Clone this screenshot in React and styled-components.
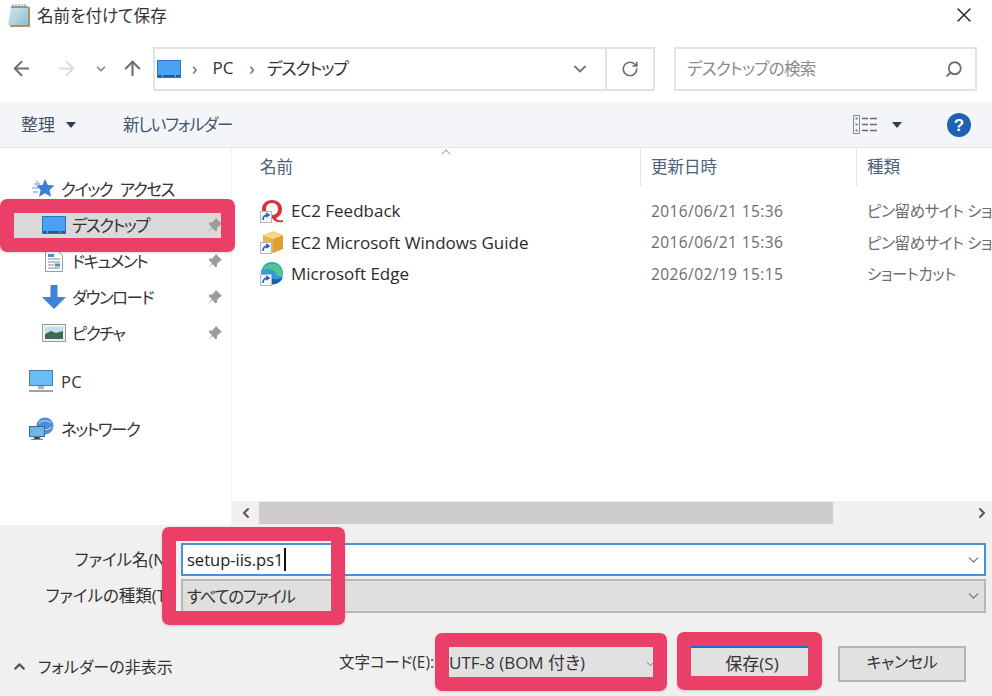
import React from 'react';
import styled, {createGlobalStyle} from 'styled-components';
import {ArrowLeft, ArrowRight, ArrowUp, ChevronDown, ChevronLeft, ChevronRight, ChevronUp, RotateCw, Search, X} from 'lucide-react';

const GlobalStyle = createGlobalStyle`
  html, body { margin: 0; padding: 0; background: #fff; }
  * { box-sizing: border-box; }
`;

const FONT = `"Open Sans", "Noto Sans CJK JP", sans-serif`;

// --- icons ---
const NotepadIcon = () => (
  <svg width="24" height="24" viewBox="0 0 24 24">
    <defs>
      <linearGradient id="pad" x1="0" y1="0" x2="1" y2="1">
        <stop offset="0" stopColor="#d5e9ef" />
        <stop offset="1" stopColor="#8fc0d2" />
      </linearGradient>
    </defs>
    <path d="M6 4h17v20H3z" fill="#a8946c" />
    <path d="M4 3h17v19H1z" fill="url(#pad)" />
    <path d="M4 3h17v2H4z" fill="#8ea2aa" />
    <path d="M6 1v4M9 1v4M12 1v4M15 1v4M18 1v4" stroke="#7f8c90" strokeWidth="1" />
  </svg>
);

const DesktopIcon = ({size = 24}) => (
  <svg width={size} height={size * 0.75} viewBox="0 0 24 18">
    <rect x="0.500" y="0.500" width="23" height="17" fill="#4aa0f2" stroke="#2f77b8" />
    <rect x="1" y="15" width="22" height="2" fill="#1c5f9e" />
    <rect x="5" y="15.500" width="1" height="1" fill="#fff" />
    <rect x="18" y="15.500" width="1" height="1" fill="#fff" />
  </svg>
);

const StarIcon = () => (
  <svg width="24" height="22" viewBox="0 0 24 22">
    <path d="M14 1l2.800 6 6.700.6-5 4.400 1.600 6.800-6.100-3.600L8 18.800l1.600-6.800-4.400-4.400 6.300-.6z" fill="#3d7fd1" />
    <path d="M3 6h6M1 10h6M2 14h5M5 3l3 2" stroke="#8fb8e6" strokeWidth="1.400" />
  </svg>
);

const DocIcon = () => (
  <svg width="18" height="22" viewBox="0 0 18 22">
    <path d="M.5.500h12l5 5v16H.5z" fill="#fff" stroke="#9a9a9a" />
    <path d="M3 4h6v3H3z" fill="#4a8ad4" />
    <path d="M3 9h12M3 12h12M3 15h6M3 18h12" stroke="#7d8a96" strokeWidth="1" />
    <rect x="10" y="13.500" width="5" height="3" fill="#4a8ad4" />
  </svg>
);

const DownloadIcon = () => (
  <svg width="24" height="24" viewBox="0 0 24 24">
    <path d="M8.500 0h7v12H24L12 24 0 12h8.500z" fill="#3f82d6" />
  </svg>
);

const PictureIcon = () => (
  <svg width="24" height="18" viewBox="0 0 24 18">
    <rect x="0.500" y="0.500" width="23" height="17" fill="#eef1f2" stroke="#9a9a9a" />
    <rect x="3" y="3" width="18" height="12" fill="#bfe0ee" />
    <path d="M3 10l6-3 5 2 7-2v8H3z" fill="#3f6a52" />
  </svg>
);

const PcIcon = () => (
  <svg width="24" height="22" viewBox="0 0 24 22">
    <rect x="0.500" y="0.500" width="23" height="15" fill="#69bdf7" stroke="#4c7ea6" />
    <path d="M9 16h6v3H9z" fill="#a8b2bb" />
    <path d="M0 21h24" stroke="#9aa3ab" strokeWidth="2" />
  </svg>
);

const NetworkIcon = () => (
  <svg width="26" height="24" viewBox="0 0 26 24">
    <circle cx="16" cy="9" r="8.500" fill="#4d8fd6" />
    <path d="M10 6c4-3 9-3 12 0M9 11c5 3 10 2 14-1" stroke="#cfe4f7" fill="none" />
    <rect x="0.500" y="9.500" width="15" height="10" fill="#6fb6ec" stroke="#3d6a90" />
    <path d="M5 20h6v2H5zM2 22.500h12" stroke="#7f8f9c" />
  </svg>
);

const PinIcon = () => (
  <svg width="16" height="16" viewBox="0 0 16 16">
    <path d="M9 1l6 6-2 1-3 3 0 3-2 0-2.500-3L1 15l4-5-3-2.500 0-2 3 0 3-3z" fill="#9b9b9b" />
  </svg>
);

const Shortcut = () => (
  <g>
    <rect x="0.500" y="12.500" width="11" height="11" fill="#f4f4f4" stroke="#b9b9b9" />
    <path d="M3 21c0-4 2-5 5-5M6 14l3 2-3 2" fill="none" stroke="#1d5fb8" strokeWidth="1.500" />
  </g>
);

const FeedbackIcon = () => (
  <svg width="24" height="24" viewBox="0 0 24 24">
    <path d="M12 1c6 0 10 4 10 9 0 5-3 8-6 9 1 2 3 3 7 2v2c-6 1-9-1-11-4-6 0-10-4-10-9s4-9 10-9zm0 3c-4 0-6 2.700-6 6s2 6 6 6 6-2.700 6-6-2-6-6-6z" fill="#d8343c" />
    <Shortcut />
  </svg>
);

const GuideIcon = () => (
  <svg width="24" height="24" viewBox="0 0 24 24">
    <path d="M3 5l10-4 10 4-10 4z" fill="#f7d47e" />
    <path d="M3 5l10 4v14H3z" fill="#e9b34a" />
    <path d="M13 9l10-4v14l-10 4z" fill="#dfa033" />
    <Shortcut />
  </svg>
);

const EdgeIcon = () => (
  <svg width="24" height="24" viewBox="0 0 24 24">
    <circle cx="12" cy="11" r="11" fill="#2f9be0" />
    <path d="M2 8c4-9 20-9 21 4-1 3-6 3-7 0 0-4-8-6-14-4z" fill="#55c58a" />
    <path d="M8 22c6 2 13-1 15-7-4 3-9 3-11 1z" fill="#1c5fa8" />
    <Shortcut />
  </svg>
);

const ViewIcon = () => (
  <svg width="25" height="19" viewBox="0 0 25 19">
    <rect x="0.500" y="0.500" width="6" height="18" fill="#f4f4f4" stroke="#8c8c8c" />
    <rect x="2.500" y="2.500" width="2" height="2" fill="#777" />
    <rect x="2.500" y="8.500" width="2" height="2" fill="#4a8ad4" />
    <rect x="2.500" y="14.500" width="2" height="2" fill="#d9534f" />
    <path d="M9 3.500h6M17 3.500h7M9 9.500h6M17 9.500h7M9 15.500h6M17 15.500h7" stroke="#6d6d6d" strokeWidth="1.300" />
  </svg>
);

const HelpIcon = () => (
  <svg width="24" height="24" viewBox="0 0 24 24">
    <circle cx="12" cy="12" r="12" fill="#1f62b5" />
    <text x="12" y="18" textAnchor="middle" fontSize="17" fontWeight="700" fontFamily="Liberation Sans, sans-serif" fill="#fff">?</text>
  </svg>
);

// --- data ---
const quickItems = [
  {name: 'デスクトップ', icon: <DesktopIcon />, selected: true},
  {name: 'ドキュメント', icon: <DocIcon />},
  {name: 'ダウンロード', icon: <DownloadIcon />},
  {name: 'ピクチャ', icon: <PictureIcon />},
];

const files = [
  {name: 'EC2 Feedback', date: '2016/06/21 15:36', type: 'ピン留めサイト ショートカット', icon: <FeedbackIcon />},
  {name: 'EC2 Microsoft Windows Guide', date: '2016/06/21 15:36', type: 'ピン留めサイト ショートカット', icon: <GuideIcon />},
  {name: 'Microsoft Edge', date: '2026/02/19 15:15', type: 'ショートカット', icon: <EdgeIcon />},
];

const App = () => {
  return (
    <>
      <GlobalStyle />
      <Dialog>
        <TitleBar>
          <NotepadIcon />
          <Title>名前を付けて保存</Title>
          <CloseButton><X size={24} strokeWidth={1.4} /></CloseButton>
        </TitleBar>

        <NavBar>
          <NavButtons>
            <ArrowLeft size={23} color="#6e6e6e" strokeWidth={2} />
            <ArrowRight size={23} color="#dcdcdc" strokeWidth={2} />
            <ChevronDown size={14} color="#8a8a8a" strokeWidth={3} />
            <ArrowUp size={23} color="#6e6e6e" strokeWidth={2.2} />
          </NavButtons>
          <AddressBar>
            <DesktopIcon />
            <Crumb $before={11} $after={15}>›</Crumb>
            <CrumbText>PC</CrumbText>
            <Crumb $before={16} $after={12}>›</Crumb>
            <CrumbText $tight>デスクトップ</CrumbText>
            <AddressDrop><ChevronDown size={20} color="#7a7a7a" strokeWidth={2.4} /></AddressDrop>
            <RefreshBox><RotateCw size={18} color="#6e6e6e" strokeWidth={2.2} /></RefreshBox>
          </AddressBar>
          <SearchBox>
            <SearchHint>デスクトップの検索</SearchHint>
            <FlippedSearch><Search size={18} color="#6e6e6e" strokeWidth={2.4} /></FlippedSearch>
          </SearchBox>
        </NavBar>

        <Toolbar>
          <ToolText>整理</ToolText>
          <Caret />
          <NewFolder>新しいフォルダー</NewFolder>
          <ToolRight>
            <ViewIcon />
            <Caret />
            <HelpSlot><HelpIcon /></HelpSlot>
          </ToolRight>
        </Toolbar>

        <Main>
          <Sidebar>
            <TreeRow $indent={31} $textAt={61}>
              <StarIcon />
              <TreeText>クイック アクセス</TreeText>
            </TreeRow>
            {quickItems.map(item => (
              <TreeRow key={item.name} $indent={41} $textAt={72} $selected={item.selected}>
                <IconSlot>{item.icon}</IconSlot>
                <TreeText>{item.name}</TreeText>
                <PinSlot><PinIcon /></PinSlot>
              </TreeRow>
            ))}
            <TreeRow $indent={29} $textAt={61} $top={12}>
              <PcIcon />
              <TreeText $plain>PC</TreeText>
            </TreeRow>
            <TreeRow $indent={29} $textAt={61} $top={12}>
              <NetworkIcon />
              <TreeText>ネットワーク</TreeText>
            </TreeRow>
          </Sidebar>

          <Content>
            <HeaderRow>
              <SortMark />
              <HeadCell $width={409} $first>名前</HeadCell>
              <HeadCell $width={216}>更新日時</HeadCell>
              <HeadCell $width={135}>種類</HeadCell>
            </HeaderRow>
            <FileList>
              {files.map(file => (
                <FileRow key={file.name}>
                  <FileName>{file.icon}<span>{file.name}</span></FileName>
                  <FileDate>{file.date}</FileDate>
                  <FileType>{file.type}</FileType>
                </FileRow>
              ))}
            </FileList>
            <ScrollBar>
              <ScrollArrow><ChevronLeft size={16} color="#555" strokeWidth={3} /></ScrollArrow>
              <ScrollThumb />
              <ScrollArrow $right><ChevronRight size={16} color="#555" strokeWidth={3} /></ScrollArrow>
            </ScrollBar>
          </Content>
        </Main>

        <Bottom>
          <FormGrid>
            <FieldLabel>ファイル名(N):</FieldLabel>
            <NameInput>
              <span>setup-iis.ps1</span><Cursor />
              <FieldChevron><ChevronDown size={17} color="#6a6a6a" strokeWidth={1.6} /></FieldChevron>
            </NameInput>
            <FieldLabel>ファイルの種類(T):</FieldLabel>
            <TypeCombo>
              <TightText>すべてのファイル</TightText>
              <FieldChevron><ChevronDown size={17} color="#6a6a6a" strokeWidth={1.6} /></FieldChevron>
            </TypeCombo>
          </FormGrid>
          <ActionRow>
            <FolderToggle>
              <ChevronUp size={17} color="#555" strokeWidth={3} />
              <span>フォルダーの非表示</span>
            </FolderToggle>
            <EncodingLabel>文字コード(E):</EncodingLabel>
            <EncodingSelect>
              <span>UTF-8 (BOM 付き)</span>
              <SmallChevron><ChevronDown size={13} color="#6a6a6a" strokeWidth={1.6} /></SmallChevron>
            </EncodingSelect>
            <SaveButton>保存(S)</SaveButton>
            <CancelButton>キャンセル</CancelButton>
          </ActionRow>
        </Bottom>

        {/* red callouts drawn on top of the dialog */}
        <Callout $x={0} $y={199} $w={235} $h={53} />
        <Callout $x={162} $y={527} $w={183} $h={98} />
        <Callout $x={435} $y={633} $w={232} $h={58} />
        <Callout $x={677} $y={632} $w={145} $h={58} />
      </Dialog>
    </>
  );
};

// Styled Components
const Dialog = styled.div`
  position: relative;
  width: 992px;
  height: 696px;
  overflow: hidden;
  display: flex;
  flex-direction: column;
  background: #fff;
  color: #222;
  font-family: ${FONT};
  font-size: 16.500px;
  font-feature-settings: "palt";
`;

const TitleBar = styled.div`
  height: 47px;
  flex: none;
  display: flex;
  align-items: flex-start;
  padding: 3px 16px 0 7px;
`;

const Title = styled.div`
  margin-left: 6px;
  margin-top: 2px;
  font-size: 16.600px;
  line-height: 22px;
  color: #333;
`;

const CloseButton = styled.div`
  margin-left: auto;
  color: #222;
  display: flex;
`;

const NavBar = styled.div`
  height: 55px;
  flex: none;
  display: flex;
  align-items: flex-start;
  padding-left: 10px;
`;

const NavButtons = styled.div`
  width: 143px;
  height: 43px;
  display: grid;
  grid-template-columns: 45px 39px 27px 23px;
  align-items: center;
`;

const AddressBar = styled.div`
  width: 502px;
  height: 44px;
  border: 2px solid #e3e3e3;
  display: flex;
  align-items: center;
  padding-left: 2px;
  font-size: 17px;
  color: #333;
`;

const Crumb = styled.span`
  margin: -2px ${props => props.$after}px 0 ${props => props.$before}px;
  color: #666;
  font-size: 18px;
  line-height: 18px;
`;

const CrumbText = styled.span`
  margin-top: -4px;
  letter-spacing: ${props => props.$tight ? '-1.3px' : '0'};
`;

const AddressDrop = styled.div`
  margin-left: auto;
  width: 50px;
  display: flex;
  justify-content: center;
`;

const RefreshBox = styled.div`
  width: 48px;
  height: 100%;
  border-left: 2px solid #e3e3e3;
  display: flex;
  align-items: center;
  justify-content: center;
`;

const SearchBox = styled.div`
  margin-left: 19px;
  width: 303px;
  height: 44px;
  border: 2px solid #e3e3e3;
  display: flex;
  align-items: center;
  justify-content: space-between;
  padding: 0 12px 0 11px;
`;

const SearchHint = styled.span`
  color: #8a8a8a;
  font-size: 16.500px;
  letter-spacing: -0.7px;
  margin-top: -2px;
`;

const FlippedSearch = styled.span`
  display: flex;
  transform: scaleX(-1);
`;

const Toolbar = styled.div`
  height: 46px;
  flex: none;
  display: flex;
  align-items: center;
  padding-left: 21px;
  background: #f3f5f9;
  border-bottom: 1px solid #e6e8ec;
  color: #44546a;
`;

const ToolText = styled.span`
  font-size: 17px;
  margin-top: -2px;
`;

const Caret = styled.span`
  margin-left: 11px;
  width: 0;
  height: 0;
  border-left: 5.500px solid transparent;
  border-right: 5.500px solid transparent;
  border-top: 6px solid #2e3f58;
`;

const NewFolder = styled.span`
  margin-left: 47px;
  font-size: 16.500px;
  letter-spacing: -1.300px;
  margin-top: -2px;
`;

const ToolRight = styled.div`
  margin-left: auto;
  display: flex;
  align-items: center;
  padding-right: 21px;
  & > ${Caret} {
    margin-left: 14px;
  }
`;

const HelpSlot = styled.span`
  margin-left: 45px;
  display: flex;
`;

const Main = styled.div`
  flex: 1;
  min-height: 0;
  display: flex;
`;

const Sidebar = styled.div`
  width: 232px;
  flex: none;
  padding-top: 23px;
  border-right: 1px solid #f0f0f0;
`;

const TreeRow = styled.div`
  position: relative;
  height: 36px;
  margin-top: ${props => props.$top || 0}px;
  padding-left: ${props => props.$indent}px;
  display: flex;
  align-items: center;
  background: ${props => props.$selected ? '#d9d9d9' : 'transparent'};
  & > span:nth-child(2) {
    position: absolute;
    left: ${props => props.$textAt}px;
  }
`;

const IconSlot = styled.span`
  width: 26px;
  display: flex;
  justify-content: center;
`;

const TreeText = styled.span`
  font-size: 16.500px;
  letter-spacing: ${props => props.$plain ? '0.4px' : '-1.500px'};
  word-spacing: 5px;
  color: #333;
`;

const PinSlot = styled.span`
  position: absolute;
  left: 207px;
  display: flex;
`;

const Content = styled.div`
  flex: 1;
  min-width: 0;
  display: flex;
  flex-direction: column;
  position: relative;
`;

const HeaderRow = styled.div`
  height: 38px;
  flex: none;
  display: flex;
  position: relative;
`;

const SortMark = styled.span`
  position: absolute;
  left: 210px;
  top: 2px;
  width: 8px;
  height: 8px;
  border-left: 1.500px solid #8a8a8a;
  border-top: 1.500px solid #8a8a8a;
  transform: rotate(45deg) scale(0.8);
`;

const HeadCell = styled.div`
  width: ${props => props.$width}px;
  flex: none;
  padding-left: ${props => props.$first ? 28 : 10}px;
  border-right: 1px solid #e5e5e5;
  font-size: 16.500px;
  line-height: 38px;
  color: #4c607a;
  &:last-child {
    border-right: none;
  }
`;

const FileList = styled.div`
  flex: 1;
  padding-top: 9px;
  overflow: hidden;
`;

const FileRow = styled.div`
  height: 31.500px;
  display: flex;
  align-items: center;
  white-space: nowrap;
`;

const FileName = styled.div`
  width: 409px;
  flex: none;
  padding-left: 28px;
  display: flex;
  align-items: center;
  gap: 7px;
  font-size: 17px;
  color: #2b2b2b;
`;

const FileDate = styled.div`
  width: 216px;
  flex: none;
  padding-left: 10px;
  font-size: 15.500px;
  letter-spacing: 0.400px;
  color: #6d6d6d;
`;

const FileType = styled.div`
  width: 136px;
  flex: none;
  padding-left: 10px;
  font-size: 15.500px;
  letter-spacing: -0.400px;
  color: #6d6d6d;
`;

const ScrollBar = styled.div`
  height: 24px;
  flex: none;
  display: flex;
  align-items: center;
  background: #f0f0f0;
  position: relative;
`;

const ScrollArrow = styled.span`
  width: 27px;
  display: flex;
  justify-content: center;
  ${props => props.$right ? 'margin-left: auto; width: 20px;' : ''}
`;

const ScrollThumb = styled.div`
  width: 574px;
  height: 22px;
  background: #cdcdcd;
`;

const Bottom = styled.div`
  height: 171px;
  flex: none;
  background: #f0f0f0;
  padding-top: 17px;
  border-top: 1px solid #f0f0f0;
`;

const FormGrid = styled.div`
  display: grid;
  grid-template-columns: 181px 805px;
  grid-template-rows: 33px 34px;
  row-gap: 3px;
`;

const FieldLabel = styled.div`
  text-align: right;
  padding-right: 6px;
  line-height: 33px;
  font-size: 16.500px;
  color: #333;
  white-space: nowrap;
`;

const NameInput = styled.div`
  position: relative;
  display: flex;
  align-items: center;
  padding-left: 4px;
  background: #fff;
  border: 2px solid #4a90d9;
  font-size: 16.500px;
  color: #222;
`;

const Cursor = styled.i`
  display: block;
  width: 1.500px;
  height: 23px;
  margin-left: 1px;
  background: #111;
`;

const FieldChevron = styled.span`
  position: absolute;
  right: 2px;
  top: 50%;
  transform: translateY(-50%);
  display: flex;
`;

const TypeCombo = styled.div`
  position: relative;
  display: flex;
  align-items: center;
  padding-left: 4px;
  background: #dfdfdf;
  border: 2px solid #b8b8b8;
  font-size: 16.500px;
  color: #333;
`;

const TightText = styled.span`
  letter-spacing: -1.300px;
`;

const ActionRow = styled.div`
  margin-top: 33px;
  height: 36px;
  display: flex;
  align-items: center;
  padding-right: 26px;
`;

const FolderToggle = styled.div`
  width: 339px;
  flex: none;
  padding: 4px 0 0 11px;
  display: flex;
  align-items: center;
  gap: 10px;
  font-size: 16px;
  color: #333;
`;

const EncodingLabel = styled.div`
  width: 110px;
  flex: none;
  padding-bottom: 6px;
  font-size: 15.500px;
  color: #333;
  white-space: nowrap;
`;

const EncodingSelect = styled.div`
  position: relative;
  width: 216px;
  height: 36px;
  flex: none;
  padding-bottom: 6px;
  background: #e1e1e1;
  display: flex;
  align-items: center;
  font-size: 17px;
  color: #333;
  white-space: nowrap;
`;

const SmallChevron = styled.span`
  position: absolute;
  right: 8px;
  top: 50%;
  transform: translateY(-50%);
  display: flex;
`;

const SaveButton = styled.div`
  margin-left: 25px;
  width: 118px;
  height: 36px;
  flex: none;
  padding: 0 0 5px 6px;
  border-top: 2px solid #1a6fc4;
  background: #e1e1e1;
  display: flex;
  align-items: center;
  justify-content: center;
  font-size: 17px;
  color: #333;
`;

const CancelButton = styled.div`
  margin-left: 30px;
  width: 128px;
  height: 36px;
  flex: none;
  padding-bottom: 6px;
  border: 2px solid #b5b5b5;
  background: #e1e1e1;
  display: flex;
  align-items: center;
  justify-content: center;
  font-size: 16px;
  letter-spacing: -0.300px;
  color: #333;
`;

const Callout = styled.div`
  position: absolute;
  left: ${props => props.$x}px;
  top: ${props => props.$y}px;
  width: ${props => props.$w}px;
  height: ${props => props.$h}px;
  border: 14px solid #ea4068;
  border-radius: 7px;
  box-shadow: 0 1px 3px rgba(0, 0, 0, 0.15);
`;

export default App;
